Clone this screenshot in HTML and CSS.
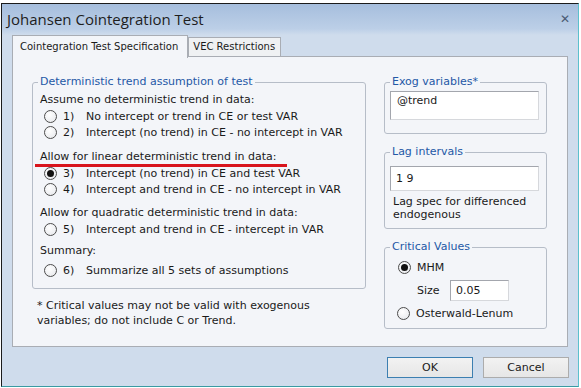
FILE: index.html
```html
<!DOCTYPE html>
<html>
<head>
    <title>Johansen Cointegration Test</title>
    <link rel="stylesheet" href="styles.css">
</head>
<body>
    <div class="window">
        <div class="titlebar">
            <span class="title">Johansen Cointegration Test</span>
            <span class="close">&#x2715;</span>
        </div>

        <div class="tabs">
            <div class="tab active">Cointegration Test Specification</div>
            <div class="tab">VEC Restrictions</div>
        </div>

        <div class="panel">
            <div class="left-col">
                <fieldset class="group trend-group">
                    <legend>Deterministic trend assumption of test</legend>

                    <div class="section">
                        <div class="heading">Assume no deterministic trend in data:</div>
                        <div class="option"><span class="radio"></span><span class="num">1)</span>No intercept or trend in CE or test VAR</div>
                        <div class="option"><span class="radio"></span><span class="num">2)</span>Intercept (no trend) in CE - no intercept in VAR</div>
                    </div>

                    <div class="section sec-linear">
                        <div class="heading"><span class="marked">Allow for linear deterministic trend in data:</span></div>
                        <div class="option"><span class="radio checked"></span><span class="num">3)</span>Intercept (no trend) in CE and test VAR</div>
                        <div class="option"><span class="radio"></span><span class="num">4)</span>Intercept and trend in CE - no intercept in VAR</div>
                    </div>

                    <div class="section sec-quad">
                        <div class="heading">Allow for quadratic deterministic trend in data:</div>
                        <div class="option"><span class="radio"></span><span class="num">5)</span>Intercept and trend in CE - intercept in VAR</div>
                    </div>

                    <div class="section sec-summary">
                        <div class="heading">Summary:</div>
                        <div class="option summary-opt"><span class="radio"></span><span class="num">6)</span>Summarize all 5 sets of assumptions</div>
                    </div>
                </fieldset>

                <p class="footnote">* Critical values may not be valid with exogenous<br>variables; do not include C or Trend.</p>
            </div>

            <div class="right-col">
                <fieldset class="group exog-group">
                    <legend>Exog variables*</legend>
                    <div class="textbox tall">@trend</div>
                </fieldset>

                <fieldset class="group lag-group">
                    <legend>Lag intervals</legend>
                    <div class="textbox">1 9</div>
                    <div class="note">Lag spec for differenced<br>endogenous</div>
                </fieldset>

                <fieldset class="group crit-group">
                    <legend>Critical Values</legend>
                    <div class="crit-opt"><span class="radio checked"></span>MHM</div>
                    <div class="size-row">
                        <span class="size-label">Size</span>
                        <div class="textbox small">0.05</div>
                    </div>
                    <div class="crit-opt osterwald"><span class="radio"></span>Osterwald-Lenum</div>
                </fieldset>
            </div>
        </div>

        <div class="footer">
            <div class="button default">OK</div>
            <div class="button">Cancel</div>
        </div>
    </div>
</body>
</html>
```

FILE: styles.css
```css
* {
    box-sizing: border-box;
}
body {
    margin: 0;
    padding: 0;
    background: #ffffff;
    font-family: "DejaVu Sans", Verdana, sans-serif;
    font-size: 11px;
    color: #1a1a1a;
}
.window {
    width: 578px;
    height: 384px;
    margin: 3px 0 0 1px;
    border: 1px solid #1b1b1b;
    border-right-color: #5cc0cc;
    border-bottom-color: #3a9aa2;
    background: #cfdcec;
    display: flex;
    flex-direction: column;
}
.titlebar {
    height: 31px;
    flex: none;
    display: flex;
    align-items: center;
    justify-content: space-between;
    padding: 0 8px 2px 5px;
    background: linear-gradient(#a6bedd, #bccfe7 80%, #cfdcec);
}
.title {
    font-family: "Open Sans", sans-serif;
    font-size: 15px;
    color: #1e1e1e;
}
.close {
    font-family: "DejaVu Sans", sans-serif;
    font-size: 12px;
    font-weight: bold;
    color: #4a5a72;
}
.tabs {
    height: 22px;
    flex: none;
    display: flex;
    align-items: flex-end;
    padding-left: 10px;
}
.tab {
    height: 19px;
    padding: 0 5px 0 4px;
    border: 1px solid #a9adb4;
    border-bottom: none;
    background: #eff1f3;
    font-size: 10px;
    line-height: 18px;
    margin-bottom: 1px;
}
.tab.active {
    height: 23px;
    padding: 0 9px 0 7px;
    margin-bottom: -1px;
    background: #f3f5f9;
    line-height: 22px;
    position: relative;
    z-index: 1;
}
.panel {
    height: 291px;
    flex: none;
    margin: -1px 10px 0 10px;
    border: 1px solid #a9adb4;
    background: #f3f5f9;
    display: flex;
    gap: 18px;
    padding: 18px 0 0 19px;
}
.group {
    margin: 0;
    border: 1px solid #b6bdc8;
    border-radius: 3px;
    padding: 0;
}
.group legend {
    color: #2458a6;
    font-size: 11px;
    line-height: 14px;
    padding: 0 2px;
}
.trend-group {
    width: 334px;
    height: 214px;
    padding: 3px 0 0 7px;
}
.trend-group legend {
    margin-left: -2px;
}
.heading {
    height: 16px;
    line-height: 16px;
}
.marked {
    position: relative;
}
.marked::after {
    content: "";
    position: absolute;
    left: -5px;
    top: 14px;
    width: 252px;
    height: 3px;
    background: #d8141c;
}
.option {
    height: 16px;
    display: flex;
    align-items: center;
    padding-left: 4px;
}
.sec-linear {
    margin-top: 9px;
}
.sec-quad {
    margin-top: 8px;
}
.sec-summary {
    margin-top: 6px;
}
.summary-opt {
    margin-top: 3px;
}
.radio {
    width: 13px;
    height: 13px;
    flex: none;
    border: 1px solid #4c4c4c;
    border-radius: 50%;
    background: radial-gradient(circle at 40% 35%, #ffffff, #e4e6ea);
    margin-right: 6px;
    display: flex;
    align-items: center;
    justify-content: center;
}
.radio.checked::after {
    content: "";
    width: 7px;
    height: 7px;
    border-radius: 50%;
    background: #111;
}
.num {
    width: 23px;
    flex: none;
}
.footnote {
    margin: 9px 0 0 5px;
    line-height: 15px;
}
.right-col {
    width: 163px;
    display: flex;
    flex-direction: column;
    gap: 11px;
}
.exog-group {
    height: 59px;
    padding: 2px 7px 0 5px;
}
.textbox {
    height: 25px;
    border: 1px solid #a3a6ad;
    border-right-color: #d6d8dc;
    border-bottom-color: #d6d8dc;
    background: #ffffff;
    padding-left: 5px;
    line-height: 23px;
}
.textbox.tall {
    height: 29px;
    line-height: 18px;
    padding-left: 6px;
}
.lag-group {
    height: 84px;
    padding: 7px 7px 0 5px;
}
.note {
    margin-top: 4px;
    padding-left: 3px;
    line-height: 13px;
}
.crit-group {
    height: 89px;
    padding: 5px 0 0 13px;
}
.crit-group legend {
    margin-left: -8px;
}
.crit-opt {
    height: 16px;
    display: flex;
    align-items: center;
}
.size-row {
    display: flex;
    align-items: center;
    margin-top: 5px;
    padding-left: 19px;
}
.size-label {
    width: 33px;
}
.textbox.small {
    width: 59px;
    height: 21px;
    line-height: 19px;
}
.osterwald {
    margin-top: 4px;
    margin-left: -1px;
}
.footer {
    flex: 1;
    display: flex;
    justify-content: flex-end;
    gap: 10px;
    padding: 10px 9px 0 0;
}
.button {
    width: 86px;
    height: 21px;
    border: 1px solid #acacac;
    background: linear-gradient(#f2f2f2, #e6e6e6);
    text-align: center;
    line-height: 19px;
    font-size: 11px;
}
.button.default {
    border-color: #3c7fb1;
}
```
